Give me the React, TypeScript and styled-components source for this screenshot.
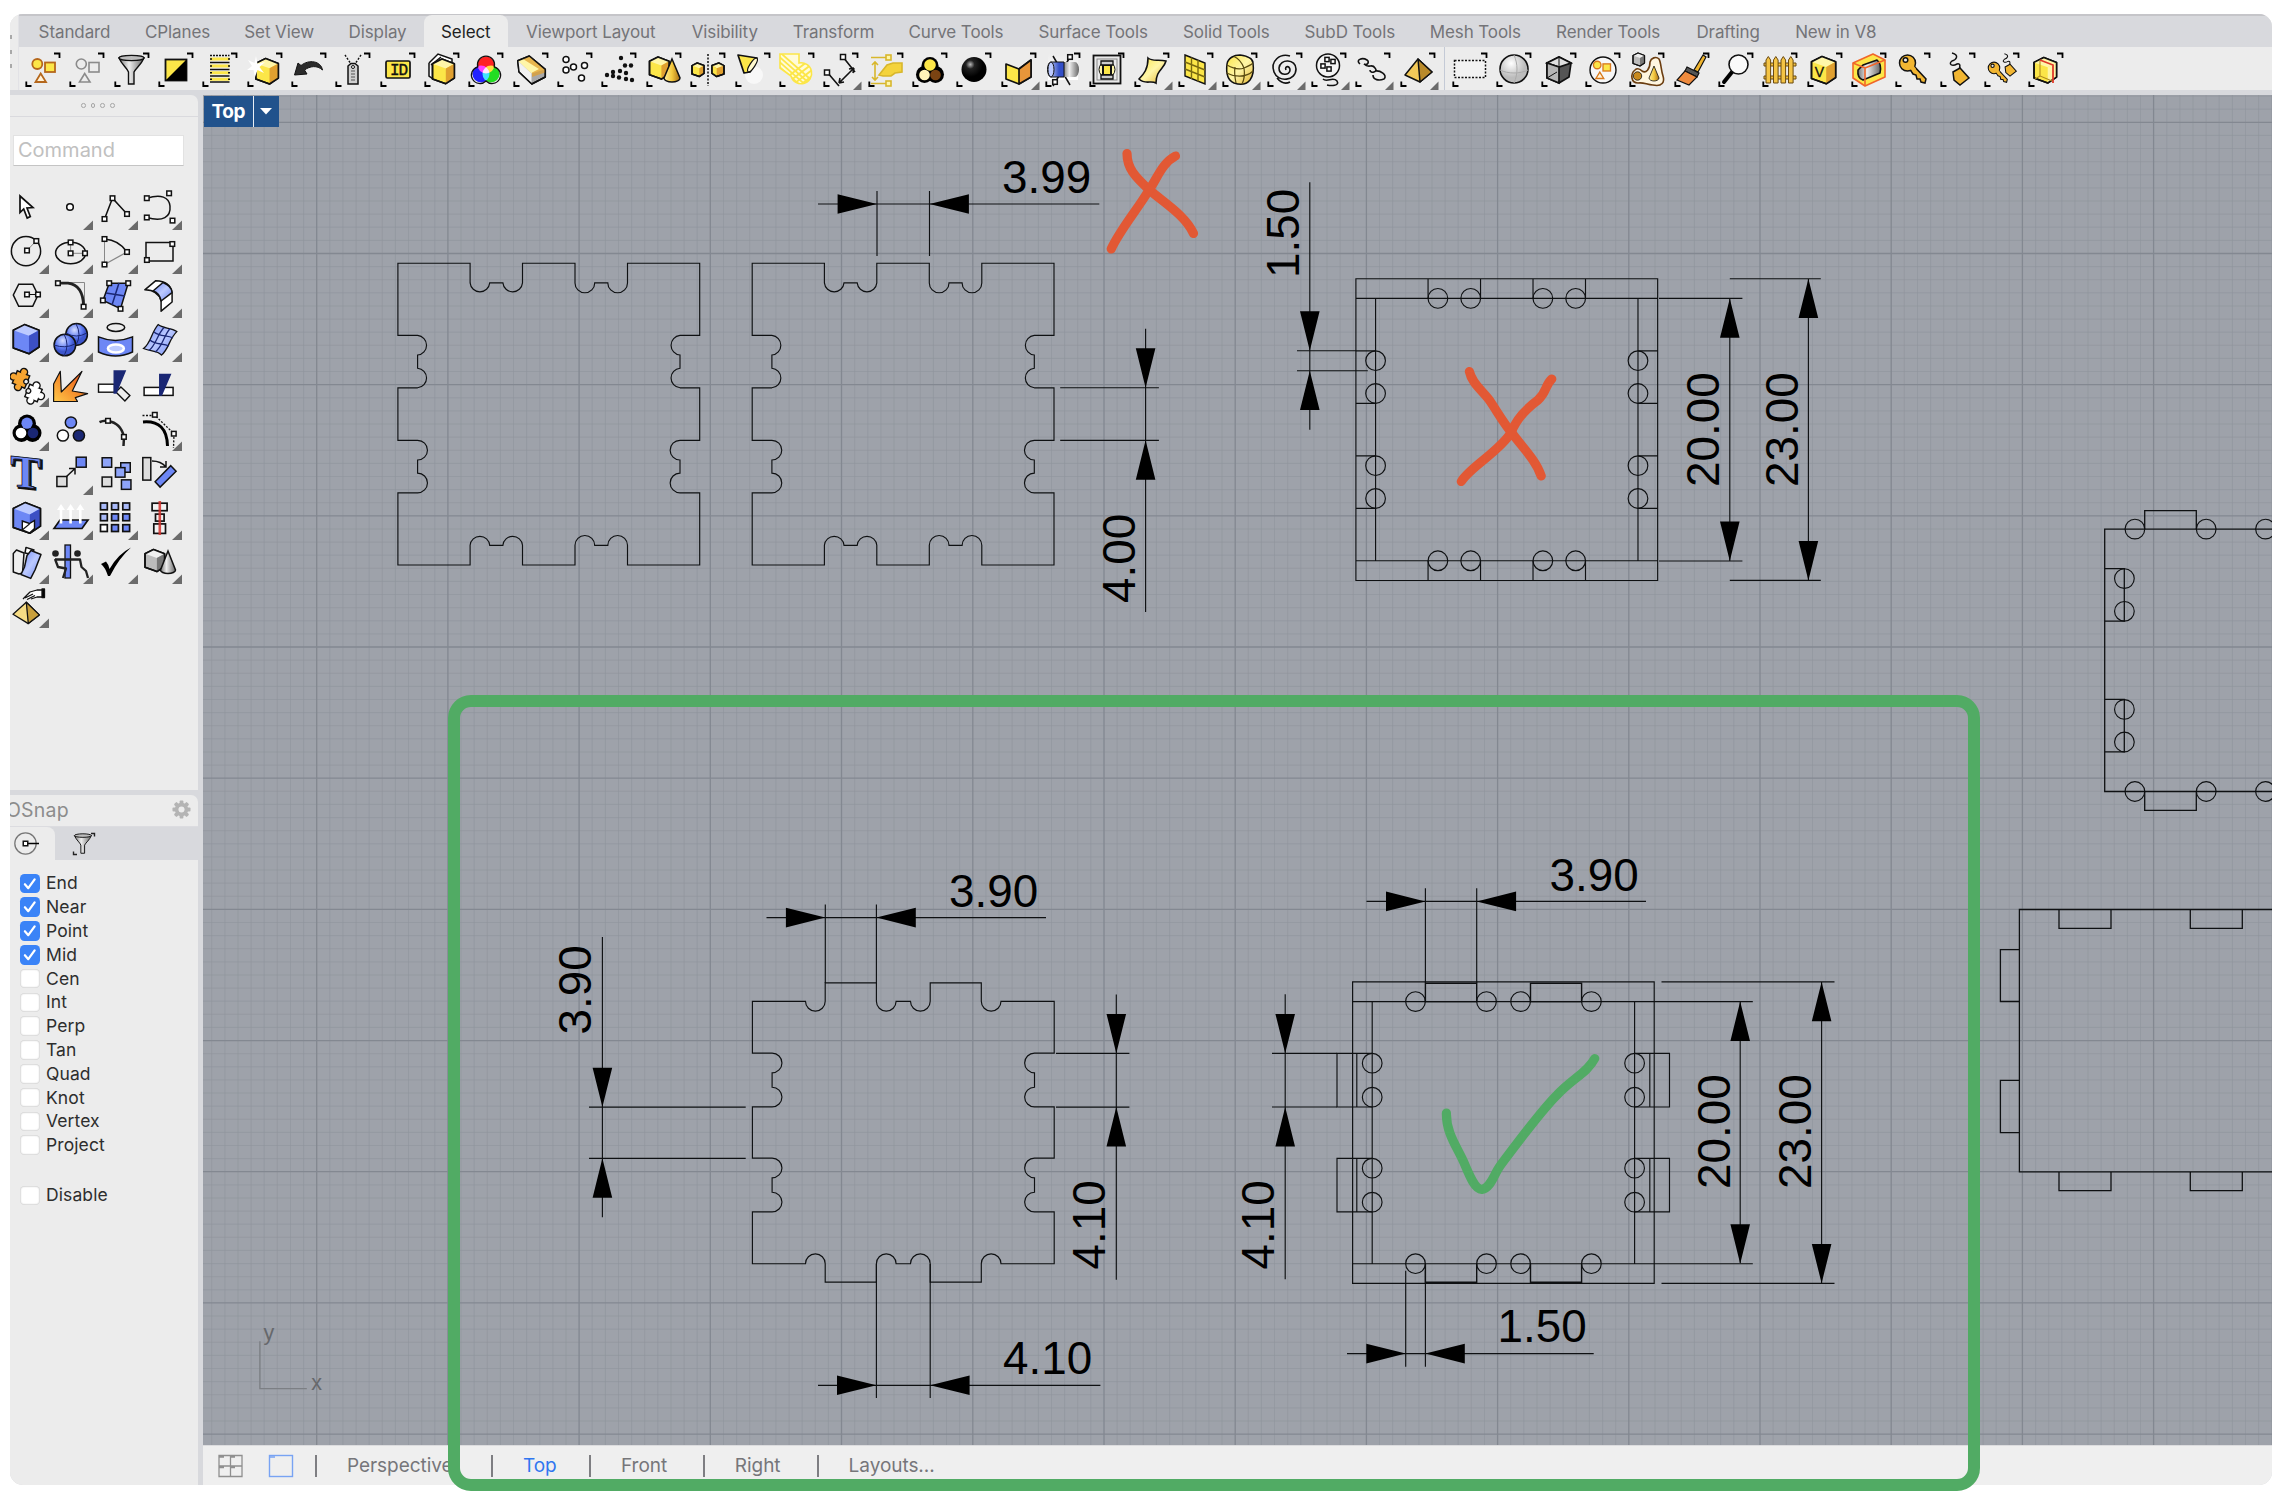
import React from "react";
import styled, { createGlobalStyle } from "styled-components";

const Global = createGlobalStyle`
  html, body { margin: 0; padding: 0; background: #fff; }
  * { box-sizing: border-box; }
  body { font-family: Inter, Roboto, "Liberation Sans", sans-serif; }
`;

/* ---------- shell ---------- */

const Page = styled.div`
  position: relative;
  width: 2286px;
  height: 1498px;
  padding: 14px 14px 13px 10px;
  overflow: hidden;
  background: #fff;
`;

const Window = styled.div`
  width: 2262px;
  height: 1471px;
  display: flex;
  flex-direction: column;
  border-radius: 13px;
  overflow: hidden;
  background: #d8d9dd;
`;

const TopArea = styled.div`
  display: flex;
  height: 76px;
  background: #ececec;
`;

const Grip = styled.div`
  width: 9px;
  display: flex;
  flex-direction: column;
  gap: 10.5px;
  padding-top: 21px;
  background: #ececec;
  border-right: 1px solid #e2e2e6;
`;

const GripDot = styled.div`
  width: 1.5px;
  height: 4px;
  background: #a9a9a9;
`;

const TopColumn = styled.div`
  flex: 1;
  display: flex;
  flex-direction: column;
`;

const TabStrip = styled.div`
  height: 33px;
  display: flex;
  padding-left: 2px;
  background: #d8d9dd;
  border-top: 2px solid #c5c5c9;
`;

const Tab = styled.div<{ $w: number; $active?: boolean }>`
  width: ${(p) => p.$w}px;
  display: flex;
  align-items: center;
  justify-content: center;
  flex: none;
  white-space: nowrap;
  font-size: 17px;
  letter-spacing: -0.1px;
  color: ${(p) => (p.$active ? "#1f1f1f" : "#747478")};
  background: ${(p) => (p.$active ? "#ececec" : "transparent")};
  border-radius: 8px 8px 0 0;
  margin-top: ${(p) => (p.$active ? "-1px" : "0")};
  padding-top: ${(p) => (p.$active ? "2px" : "1px")};
`;

const ToolBar = styled.div`
  height: 43px;
  display: flex;
  padding: 5px 0 0 6px;
  background: #ececec;
`;

const ToolCell = styled.div`
  width: 44.35px;
  height: 38px;
  flex: none;
  svg { display: block; overflow: visible; }
`;

const ToolSeparator = styled.div`
  width: 1px;
  height: 43px;
  margin: -5px 7px 0 0;
  background: #c4cad6;
`;

const Body = styled.div`
  flex: 1;
  display: flex;
  gap: 5px;
  padding-top: 5px;
  min-height: 0;
`;

/* ---------- sidebar ---------- */

const Sidebar = styled.div`
  width: 188px;
  display: flex;
  flex-direction: column;
  gap: 5px;
`;

const Panel = styled.div<{ $h?: number }>`
  height: ${(p) => (p.$h ? p.$h + "px" : "auto")};
  flex: ${(p) => (p.$h ? "none" : "1")};
  background: #ececec;
  border-radius: 0 7px 0 0;
  overflow: hidden;
`;

const DotHeader = styled.div`
  height: 21.5px;
  display: flex;
  align-items: center;
  gap: 5.1px;
  padding-left: 71px;
  border-bottom: 1px solid #dadade;
`;

const HeaderDot = styled.div`
  width: 4.6px;
  height: 4.6px;
  border: 1.2px solid #a6a6a6;
  border-radius: 50%;
`;

const CommandInput = styled.div`
  width: 171px;
  height: 31px;
  margin: 18px 0 25px 3px;
  padding: 0 0 1px 4px;
  display: flex;
  align-items: center;
  background: #fff;
  border: 1px solid #e2e2e2;
  border-bottom-color: #c4c4c4;
  color: #c0c0c0;
  font-size: 20px;
`;

const ToolGrid = styled.div`
  display: grid;
  grid-template-columns: repeat(4, 44.4px);
  grid-auto-rows: 44.3px;
  svg { display: block; overflow: visible; }
`;

const OsnapHeader = styled.div`
  height: 32px;
  display: flex;
  align-items: center;
  justify-content: space-between;
  padding: 0 7px 2px 0;
  border-bottom: 1px solid #dcdce0;
`;

const OsnapTitle = styled.span`
  margin-left: -4px;
  font-size: 19.5px;
  letter-spacing: 0.2px;
  color: #8c8c8c;
`;

const OsnapTabs = styled.div`
  height: 33px;
  display: flex;
  background: #d8d9dd;
`;

const OsnapTab = styled.div<{ $active?: boolean }>`
  width: ${(p) => (p.$active ? 45 : 56)}px;
  height: 33px;
  background: ${(p) => (p.$active ? "#ececec" : "transparent")};
  border-radius: 0 8px 0 0;
  svg { display: block; overflow: visible; }
`;

const CheckList = styled.div`
  display: flex;
  flex-direction: column;
  padding: 11.5px 0 0 10px;
`;

const CheckRow = styled.div<{ $gap?: boolean }>`
  height: 23.8px;
  margin-top: ${(p) => (p.$gap ? "26.5px" : "0")};
  display: flex;
  align-items: center;
  gap: 6.5px;
  font-size: 17.5px;
  line-height: 20px;
  letter-spacing: 0.1px;
  color: #2e2e2e;
`;

const CheckBox = styled.div<{ $on?: boolean }>`
  width: 19.5px;
  height: 19.5px;
  border-radius: 4.5px;
  background: ${(p) => (p.$on ? "#3a83f7" : "#fff")};
  box-shadow: ${(p) => (p.$on ? "none" : "inset 0 0 1.5px 0.7px rgba(0,0,0,.2)")};
  svg { display: block; }
`;

/* ---------- viewport ---------- */

const Main = styled.div`
  flex: 1;
  display: flex;
  flex-direction: column;
  min-width: 0;
`;

const Viewport = styled.div`
  position: relative;
  height: 1350px;
  overflow: hidden;
  background: #9ea2aa;
  svg.model { display: block; }
`;

const ViewLabel = styled.div`
  position: absolute;
  left: 1px;
  top: 1px;
  height: 30.5px;
  display: flex;
  gap: 1.5px;
  background: #e9eef5;
`;

const ViewName = styled.div`
  width: 48.5px;
  display: flex;
  align-items: center;
  justify-content: center;
  background: #21528c;
  color: #fff;
  font-weight: 700;
  font-size: 19px;
  letter-spacing: -0.4px;
`;

const ViewArrow = styled(ViewName)`
  width: 24.5px;
`;

const Footer = styled.div`
  flex: 1;
  display: flex;
  align-items: center;
  background: #efefef;
  border-top: 1px solid #dcdcde;
  padding-left: 15px;
  svg { display: block; flex: none; }
`;

const FooterItem = styled.div<{ $w: number; $active?: boolean }>`
  width: ${(p) => p.$w}px;
  flex: none;
  padding: 0 0 1px 30px;
  font-size: 19px;
  letter-spacing: -0.05px;
  color: ${(p) => (p.$active ? "#2f76f0" : "#76767a")};
  border-left: 2px solid #7e7e82;
  line-height: 21px;
  white-space: nowrap;
`;

const GreenFrame = styled.div`
  position: absolute;
  left: 448px;
  top: 695px;
  width: 1532px;
  height: 796px;
  border: 12px solid #51ab64;
  border-radius: 23px;
`;

/* ---------- shared drawing helpers ---------- */

const K = "#111";
const Y = "#fce648";
const YD = "#e0a030";
const YL = "#fff6a8";
const B = "#6d87f5";
const BD = "#3c50c4";
const BL = "#bccaff";
const NV = "#1a2774";

const Cube = ({ x = 0, y = 0, s = 1, t = YL, l = Y, r = YD, sw = 1.6 }: any) => (
  <g transform={`translate(${x} ${y}) scale(${s})`} stroke={K} strokeWidth={sw / s} strokeLinejoin="round">
    <path d="M0 5 L10 0 L23 5 L23 20 L14 26 L0 21Z" fill={l} />
    <path d="M0 5 L10 0 L23 5 L14 10Z" fill={t} stroke="none" />
    <path d="M14 10 L23 5 L23 20 L14 26Z" fill={r} stroke="none" />
    <path d="M0 5 L10 0 L23 5 L23 20 L14 26 L0 21Z" fill="none" />
  </g>
);

const Sq = ({ x, y, s = 4.6, f = "#fff", sw = 1.5 }: any) => (
  <rect x={x - s / 2} y={y - s / 2} width={s} height={s} fill={f} stroke={K} strokeWidth={sw} />
);

const Key = () => (
  <g stroke={K} strokeWidth="1.5" fill="#f2b632">
    <path d="M13 14 L17 12 L31 27 L30 31 L26 30 L25 27 L22 27 L21 23 L18 22Z" />
    <circle cx="12.500" cy="11" r="8" />
    <circle cx="10.500" cy="8" r="2.300" fill="#ececec" />
    <path d="M15 16.500 L18.500 13.500 L21 17 L18 20Z" stroke="none" />
  </g>
);

const Tag = () => (
  <g stroke={K} fill="none" strokeWidth="1.5">
    <path d="M12 1 C20 3 16 8 12 9 C8 12 12 15 17 12 C21 11 20 15 19 18" />
    <path d="M13 20 L20 16 L29 26 L20 33 L14 28Z" fill="#f2b632" />
  </g>
);

const shapes = (s: string, f: string) => (
  <g stroke={s} fill={f} strokeWidth="1.8">
    <circle cx="12.300" cy="12" r="5" />
    <rect x="20" y="10.500" width="10" height="9.500" />
    <path d="M15.700 21.500 L10.500 30 L21 30Z" fill="#fff2d8" />
  </g>
);

const funnel = (
  <g stroke={K} strokeWidth="1.4">
    <path d="M5 6 C8 13 13 16 14.500 20 L14.500 32 L20 32 L20 20 C22 16 27 13 30 6Z" fill="url(#steel)" />
    <ellipse cx="17.500" cy="6" rx="12.500" ry="2.600" fill="#bdbdbd" />
  </g>
);

/* ---------- horizontal toolbar icons ---------- */

const toolIcons: { art: React.ReactNode; more?: boolean }[] = [
  { art: shapes("#b5671b", Y) },
  { art: <g stroke="#8b8b8b" fill="none" strokeWidth="1.6"><circle cx="12.300" cy="12" r="5" /><rect x="20" y="10.500" width="10" height="9.500" /><path d="M15.700 21.500 L10.500 30 L21 30Z" /></g> },
  { art: funnel },
  { art: <g><rect x="7.500" y="7.500" width="21" height="21" fill={Y} stroke={K} strokeWidth="1.800" /><path d="M28.500 7.500 V28.500 H7.500Z" fill="#000" /></g> },
  { art: <g>{[3.5, 10.5, 17.5, 24, 30].map((y) => <path key={y} d={`M8 ${y} H27.500`} stroke={K} strokeWidth="1.600" strokeDasharray={y === 3.5 ? "2 1" : ""} />)}{[7, 14, 20.8, 27.2].map((y) => <g key={y}><path d={`M8 ${y} H27.500`} stroke={Y} strokeWidth="3" /><path d={`M8 ${y} h2 M26 ${y} h2`} stroke={K} strokeWidth="1.500" /></g>)}</g> },
  { art: <g><Cube x={8.8} y={6.5} s={0.98} /><path d="M9 4 L10.500 12 L18 10 L12.500 15 L17 21 L10.500 18 L8 25 L6.500 18 L0 18 L5 14 L1 8 L7.500 11Z" fill="#fff" /></g> },
  { art: <path d="M3.500 23 L7 11 L10 13.500 C18 7 30 9 31.500 18 C26 13 19 14 13.500 18 L16 22Z" fill="#2b2b2b" stroke={K} /> },
  { art: <g><path d="M10 3 L16 12 M26 3 L20 12" stroke={K} strokeDasharray="2 1.500" strokeWidth="1.400" /><path d="M13 14 L16 11.500 H20 L23 14 V32 H13Z" fill="#cfcfcf" stroke={K} strokeWidth="1.500" /><circle cx="18" cy="15" r="1.500" fill="#fff" stroke={K} /><path d="M16 19 H20 M16 22 H20 M16 25 H20 M16 28 H20" stroke="#555" strokeWidth="1.200" /></g> },
  { art: <g><rect x="6" y="9" width="24" height="17" rx="1.500" fill={Y} stroke={K} strokeWidth="1.700" /><text x="18.500" y="23" fontSize="16" fontFamily="Liberation Mono, monospace" textAnchor="middle" fill={K} stroke={K} strokeWidth=".4" letterSpacing="-1">ID</text></g> },
  { art: <g><path d="M5 11 L14 2 L28 7 L28 12 M5 11 V24 L9 27 M7 13 L17 5" fill="#fff" stroke={K} strokeWidth="1.500" /><Cube x={8.5} y={7} s={0.95} /></g> },
  { art: <g><g style={{ isolation: "isolate" }}><circle cx="18" cy="13" r="8.500" fill="#f22" /><circle cx="13" cy="22" r="8.500" fill="#22f" style={{ mixBlendMode: "screen" }} /><circle cx="23" cy="22" r="8.500" fill="#2d2" style={{ mixBlendMode: "screen" }} /></g><path d="M9.800 14.800 A8.500 8.500 0 1 1 26.200 14.800 A8.500 8.500 0 1 1 18 29 A8.500 8.500 0 1 1 9.800 14.800Z" fill="none" stroke={K} strokeWidth="1.300" /></g> },
  { art: <g stroke={K} strokeWidth="1.500" strokeLinejoin="round"><path d="M4.700 8.700 L16.300 4 L32.300 17.300 V25 L18.800 32 L6 20Z" fill="#a8a8a8" /><path d="M4.700 8.700 L16.300 4 L32.300 17.300 L18.500 21.500Z" fill={YL} stroke="none" /><path d="M4.700 8.700 L18.500 21.500 V31 L6 19Z" fill="#f2f2f2" stroke="none" /><path d="M10 7 L16.300 4 L32 17.300 V20.500 L19 25 V20.500 L26 17Z" fill={YD} stroke="none" opacity=".75" /><path d="M4.700 8.700 L16.300 4 L32.300 17.300 V25 L18.800 32 L6 20Z" fill="none" /></g> },
  { art: <g fill="#fff" stroke={K} strokeWidth="1.500">{[[9, 7.500], [9, 18], [16.500, 15], [27.500, 13.500], [24.500, 26]].map(([a, b]) => <circle key={a + "-" + b} cx={a} cy={b} r="3" />)}</g> },
  { art: <g fill={K}>{[[20, 6], [24, 13.500], [30, 13.500], [12, 20], [19, 19], [6, 23], [12, 24], [18, 25.500], [25, 21], [25, 27], [31, 28]].map(([a, b]) => <circle key={a + "-" + b} cx={a} cy={b} r="2.200" />)}</g> },
  { art: <g><Cube x={3.5} y={5} s={0.85} /><path d="M26 7 L34 26 A8 4 0 0 1 18 26Z" fill="url(#gold)" stroke={K} strokeWidth="1.500" /></g> },
  { art: <g><path d="M18 2 V34" stroke={K} strokeWidth="1.500" strokeDasharray="2 1.500" /><Cube x={2} y={11} s={0.52} /><g transform="translate(34 0) scale(-1 1)"><Cube x={0} y={11} s={0.52} r={Y} l={YD} /></g></g> },
  { art: <g><circle cx="19" cy="23" r="9" fill="#f8f8f8" /><path d="M3 3 L9 21 L15 20 L22 6Z" fill={Y} stroke={K} strokeWidth="1.700" strokeLinejoin="round" /><ellipse cx="17.500" cy="13" rx="2.500" ry="8" transform="rotate(33 17.500 13)" fill="#fff9cf" stroke={K} strokeWidth="1.200" /></g> },
  { art: <g><clipPath id="hatchclip"><path d="M1 2 H20 V11 A10.500 10.500 0 1 1 12 24 L1 16Z" /></clipPath><path d="M1 2 H20 V11 A10.500 10.500 0 1 1 12 24 L1 16Z" fill="#fffbd8" stroke={Y} strokeWidth="1.600" /><g clipPath="url(#hatchclip)" stroke={Y} strokeWidth="1.800">{[0, 1, 2, 3, 4, 5, 6, 7, 8, 9, 10].map((o) => <path key={o} d={o < 5 ? `M-4 ${-4 + o * 5} L30 ${26 + o * 5}` : `M-6 ${o * 6 + 6} L46 ${o * 6 - 34}`} />)}</g></g> },
  { art: <g stroke={K} strokeWidth="1.600"><path d="M20 5 L32 20 M4 20 L16 34 M31 16 L16 31 M31 16 l-5 1 M31 16 l-1 5 M16 31 l5 -1 M16 31 l1 -5" /><Sq x={20} y={5} s={5} /><Sq x={4} y={20.500} s={5} /></g>, more: true },
  { art: <g stroke="#d8b72c" fill="none" strokeWidth="1.600"><path d="M3 5.500 H18 M3 31.500 H18 M7 11 V27 M4 13 L7 10 L10 13 M4 25 L7 28 L10 25" /><rect x="18" y="3" width="5" height="5" fill={YL} /><rect x="18" y="29" width="5" height="5" fill={YL} /><path d="M11 23 L19 13 L25 11 H34 V20 L27 21 L23 24 L15 24Z" fill="#f4d33c" /></g> },
  { art: <g><g fill="#000"><circle cx="18" cy="13.500" r="8.500" /><circle cx="12.500" cy="22.500" r="8.500" /><circle cx="23.500" cy="22.500" r="8.500" /></g><circle cx="18" cy="13" r="5.800" fill={Y} /><circle cx="12.500" cy="23" r="5.300" fill="#fff4b8" /><circle cx="23.500" cy="23" r="5.300" fill="#7a4312" /></g> },
  { art: <circle cx="18" cy="17.500" r="12.500" fill="url(#black)" /> },
  { art: <g stroke={K} strokeWidth="1.700" strokeLinejoin="round"><path d="M5 12 L18 17 L30 8 V25 L18 32 L5 27Z" fill={Y} /><path d="M18 17 L30 8 V25 L18 32Z" fill="#e8963a" /></g>, more: true },
  { art: <g><rect x="3" y="2" width="30" height="26" fill="url(#fade)" /><path d="M8 34 L25 5 M8 4 L25 33" stroke={K} strokeWidth="1.500" /><path d="M18 10 H30 A4 7.500 0 0 1 30 25 H18Z" fill="url(#steel)" /><path d="M6 10 H19 V25 H6 A3.500 7.500 0 0 1 6 10Z" fill="url(#bluecyl)" stroke={K} /><ellipse cx="6" cy="17.500" rx="3" ry="7.500" fill={BL} stroke={K} /><Sq x={25} y={5} /><Sq x={10} y={30} /></g> },
  { art: <g fill="none" stroke={K}><rect x="4.500" y="3.500" width="27" height="28" fill="#e9e9e9" strokeWidth="1.800" /><rect x="8" y="7" width="20" height="21" stroke="#888" /><circle cx="18" cy="17.500" r="8" fill={YL} /><rect x="14" y="13" width="8" height="10" fill={Y} strokeWidth="2" /><path d="M12 9 H24 V13 H12Z M12 23 H24 V27 H12Z" fill="#ccc" strokeWidth="1.300" /></g> },
  { art: <path d="M14 6 C19 10 24 7 32 9 C30 17 22 18 22 31 C17 28 11 33 5 27 C10 22 14 17 14 6Z" fill="url(#ylin)" stroke={K} strokeWidth="1.600" />, more: true },
  { art: <g stroke={K} strokeWidth="1.400" fill="none"><path d="M7 3 L27 11 V32 L7 24Z" fill={Y} /><path d="M13.500 5.500 V27 M20 8 V29.500 M7 10 L27 18 M7 17 L27 25" stroke="#7a6a10" /></g>, more: true },
  { art: <g stroke={K} strokeWidth="1.500"><path d="M5 12 C6 6 12 3 18 3 C25 4 31 6 31 11 C32 18 31 24 28 28 C24 33 18 33 12 31 C5 28 4 20 5 12Z" fill="url(#ylin)" /><path d="M5 13 C12 17 17 18 22 16 C27 14 30 12 31 11 M22 16 C23 22 22 28 20 32 M13 15 C12 20 13 26 14 31 M4.500 21 C12 25 24 26 31 19 M12 4.500 C18 7 20 11 22 16" fill="none" strokeWidth="1.200" stroke="#5a4a10" /></g>, more: true },
  { art: <path d="M18 18 C16 14 22 13 22 18 C22 24 11 24 11 16 C12 6 28 7 28 17 C28 29 10 31 6 20 C2 9 12 1 22 4 M9 26 C13 31 18 32 22 30" transform="translate(1 0)" fill="none" stroke={K} strokeWidth="1.600" />, more: true },
  { art: <g fill="none" stroke={K} strokeWidth="1.500"><circle cx="17" cy="13.500" r="11.500" fill="#f4f4f4" /><Sq x={16} y={7.500} s={4.200} /><Sq x={22} y={9.500} s={4.200} /><Sq x={12} y={14} s={4.200} /><Sq x={18} y={17} s={4.200} /><path d="M12 27 C16 31 22 24 26 29 C29 34 20 34 16 33" /></g>, more: true },
  { art: <g fill="none" stroke={K} strokeWidth="1.600"><path d="M5 12 C0 8 7 5 12 8 C15 10 12 14 9 12 M9 12 C14 17 17 11 20 16 C24 20 15 22 15 18 M20 19 C25 18 33 23 29 27 C24 29 18 28 18 23" /></g>, more: true },
  { art: <g stroke={K} strokeWidth="1.500" strokeLinejoin="round"><path d="M18 7 L5 23 L20 30 L32 20Z" fill="#f3c958" /><path d="M18 7 L20 30 L32 20Z" fill="#b98a2a" /></g>, more: true },
];

const toolIcons2: { art: React.ReactNode; more?: boolean }[] = [
  { art: <rect x="2.500" y="8.500" width="31" height="17" fill="#f2f2f2" stroke={K} strokeWidth="1.500" strokeDasharray="2 1.500" /> },
  { art: <g><circle cx="18" cy="17" r="14" fill="url(#ball)" stroke={K} strokeWidth="1.600" /><path d="M18 3 C22 12 22 22 18 31 M4 18 C12 22 24 22 32 18" stroke="#aaa" fill="none" /></g> },
  { art: <g stroke={K} strokeWidth="1.700"><path d="M6 11 L18 5 L30 11 L28 25 L18 31 L6 26Z" fill="#555" /><path d="M6 11 L18 5 L30 11 L18 15Z" fill="#e0e0e0" /><path d="M6 11 L18 15 V31 L6 26Z" fill="#b5b5b5" /><path d="M18 5 V15 M6 26 L16 20" strokeWidth="1" /></g> },
  { art: <g><circle cx="18" cy="18" r="13" fill="#f7f7f7" stroke={K} strokeWidth="1.400" /><g transform="translate(3 4) scale(.75)">{shapes("#d97a1e", Y)}</g></g> },
  { art: <g><Cube x={4} y={1} s={0.5} t="#eee" l="#bbb" r="#777" sw={1.2} /><path d="M6 18 C1 22 2 31 9 31 C15 30 18 33 24 33 C33 35 36 30 34 24 C32 18 32 10 30 7 C27 4 22 6 21 10 C21 17 17 22 13 19 C11 17 8 16 6 18Z" fill="#fff6e0" stroke="#6b3d10" strokeWidth="1.600" /><circle cx="8.500" cy="24" r="4.200" fill="#c98a1e" stroke={K} strokeWidth=".8" /><path d="M25 14 L30 26 A5 3 0 0 1 20 26Z" fill="url(#gold)" stroke={K} strokeWidth=".8" /></g> },
  { art: <g stroke={K} strokeWidth="1.200"><path d="M29 3 L32 5 L24 20 L20 18Z" fill="#f0b52f" /><path d="M13 15 L25 21 L23 25 L11 19Z" fill="#555" /><path d="M11 19 L23 25 L15 33 L3 28Z" fill="#ef8b3e" /></g> },
  { art: <g><path d="M14 20 L6 30" stroke="#000" strokeWidth="4" strokeLinecap="round" /><circle cx="20.500" cy="12.500" r="9.500" fill="#fafafa" stroke={K} strokeWidth="1.600" /></g> },
  { art: <g stroke="#6b4a10" strokeWidth="1" fill="#f4c445"><path d="M2 11 H34 V14 H2Z M2 24 H34 V27 H2Z" />{[4, 11.5, 19, 26.5].map((x) => <path key={x} d={`M${x} 8 l2.300 -3.500 l2.300 3.500 V31 h-4.600Z`} />)}</g> },
  { art: <g><Cube x={4.500} y={4.500} s={1.05} /><text x="12.500" y="25" fontSize="14" textAnchor="middle" fill={K} stroke={K} strokeWidth=".3" fontFamily="Liberation Sans, sans-serif">V</text></g> },
  { art: <g strokeWidth="1.600" strokeLinejoin="round"><path d="M2 11 L22 2 L34 8 V25 L14 34 L2 26Z" fill={Y} stroke="#f0662a" /><path d="M7 18 L12 13 L26 8 Q31 12 29 21 L12 28 Q6 26 7 18Z" fill="url(#steel)" stroke={K} /><path d="M2 11 L14 16 L34 8 M14 16 V34" fill="none" stroke="#f0662a" /></g> },
  { art: <Key /> },
  { art: <Tag /> },
  { art: <g><g transform="translate(1 8) scale(.72)"><Key /></g><g transform="translate(12 1) scale(.7)"><Tag /></g></g> },
  { art: <g><Cube x={6} y={5.500} s={0.98} l={Y} r={YL} /><path d="M12 8 L25 13 V31" fill="none" stroke="#e03a2a" strokeWidth="1.800" /><path d="M12 9 V24 L24 29 M12 24 L7 27" fill="none" stroke="#b08a20" strokeWidth="1.100" /></g> },
];

const ToolIcon = ({ art, more }: { art: React.ReactNode; more?: boolean }) => (
  <ToolCell>
    <svg width="36" height="36" viewBox="0 0 36 36">
      {art}
      <path d="M29 1.500 H34.500 V6 M1.300 29.500 V34 H6.500" fill="none" stroke="#000" strokeWidth="1.800" />
      {more && <path d="M38.500 29.500 V38 H30Z" fill="#6b6b6b" />}
    </svg>
  </ToolCell>
);

/* ---------- sidebar icons ---------- */

const line = { fill: "none", stroke: K, strokeWidth: 1.5 } as const;
const Men = () => (
  <g fill="#222">
    <rect x="11" y="0" width="5.500" height="33" fill={B} stroke={K} strokeWidth="1.300" />
    <circle cx="1.500" cy="8.500" r="3.300" /><circle cx="23.500" cy="8.500" r="3.300" />
    <path d="M1 14.500 H26 L27.500 22 L32 26 L34 33" fill="none" stroke="#222" strokeWidth="2.300" strokeLinejoin="round" />
    <path d="M1 14 L4 22 L12 23.500 L9 33" fill="none" stroke="#222" strokeWidth="2.300" strokeLinejoin="round" />
  </g>
);

/* A jigsaw piece: body and knobs are outlined together, then filled on top to merge them. */
const Piece = ({ x, y, r, fill }: { x: number; y: number; r: number; fill: string }) => {
  const parts = (
    <>
      <rect x="-6" y="-6" width="12" height="12" />
      <circle cx="0" cy="-8" r="2.900" />
      <circle cx="0" cy="8" r="2.900" />
      <circle cx="-8" cy="0" r="2.900" />
    </>
  );
  return (
    <g transform={`translate(${x} ${y}) rotate(${r})`}>
      <g stroke={K} strokeWidth="2.800" fill={K}>{parts}</g>
      <g fill={fill}>{parts}</g>
      <circle cx="5.500" cy="0" r="2.400" fill="#ececec" stroke={K} strokeWidth="1.300" />
    </g>
  );
};

const sideIcons: { art: React.ReactNode; more?: boolean }[] = [
  { art: <path d="M10 5 V21.500 L13.700 18 L17.200 27 L20.300 25.500 L17 17 L23 16.500Z" fill="#fff" stroke={K} strokeWidth="1.700" /> },
  { art: <circle cx="16" cy="16" r="3.300" fill="#fff" stroke={K} strokeWidth="1.600" />, more: true },
  { art: <g><path d="M5.500 28 L13.500 7.200 L28 23" {...line} /><Sq x={5.500} y={28} /><Sq x={13.500} y={7.200} /><Sq x={28} y={23} /></g>, more: true },
  { art: <g><path d="M3.800 7.200 C18 3 26 6 27 15 C28 26 20 31 3.800 26.500" {...line} /><Sq x={3.800} y={7.200} /><Sq x={26.100} y={2.300} /><Sq x={3.800} y={26.500} /><Sq x={29.500} y={29.600} /></g>, more: true },
  { art: <g><circle cx="16" cy="16.200" r="14.600" {...line} /><path d="M17 15.500 L26 6" stroke="#888" /><Sq x={17} y={15.500} /><Sq x={26.300} y={6} /></g>, more: true },
  { art: <g><ellipse cx="16.600" cy="18" rx="15" ry="10.700" {...line} /><path d="M16.600 7 V18.300 H31" stroke="#888" fill="none" /><Sq x={16.600} y={7.400} /><Sq x={16.600} y={18.300} /><Sq x={31} y={18.300} /></g>, more: true },
  { art: <g><path d="M5.500 29.500 V4" stroke="#888" /><path d="M28 17 L5.500 29.500" stroke="#888" strokeWidth="1.300" /><path d="M5.500 4 Q20 5 28 17" {...line} /><Sq x={5.500} y={4} /><Sq x={28} y={17} /><Sq x={5.500} y={29.500} /></g>, more: true },
  { art: <g><rect x="3" y="7.500" width="27" height="18.500" {...line} /><Sq x={29.300} y={9} /><Sq x={3.900} y={25} /></g>, more: true },
  { art: <g><path d="M3.300 16 L8.700 5.200 H22.700 L28 16 L22.700 27.300 H8.700Z" {...line} /><path d="M17 15.500 H28" stroke={K} /><Sq x={17} y={15.500} /><Sq x={28} y={15.500} /></g>, more: true },
  { art: <g><path d="M8 3.500 H30.500 V26" fill="none" stroke="#888" /><path d="M4 4.200 H14 Q29 6 29.600 27" fill="none" stroke="#222" strokeWidth="2.800" /><Sq x={3.900} y={4.200} /><Sq x={29.600} y={27.700} /></g>, more: true },
  { art: <g stroke={K} strokeWidth="1.500"><path d="M10.200 4.200 H29.200 L21.500 29.800 L4 21.400Z" fill={B} /><path d="M20 4 L13 26 M7 14 L26 17" stroke={NV} /><Sq x={10.200} y={4.200} /><Sq x={29.200} y={4.200} /><Sq x={21.500} y={29.800} /><Sq x={3.900} y={21.400} /></g>, more: true },
  { art: <g stroke={K} strokeWidth="1.500" strokeLinejoin="round"><path d="M1.800 10.800 L12.800 1.700 C22 2 28 6 29.100 13.600 L29.100 23 L18.100 32.200 V22 C16 14 10 11 1.800 10.800Z" fill="#fff" /><path d="M10 12 L20 3.500 C26 6 29 9 29 13.600 L18.100 22 C17 17 14 13 10 12Z" fill="url(#blin)" /></g>, more: true },
  { art: <Cube x={3.300} y={1.600} s={1.120} t={BL} l={B} r={BD} />, more: true },
  { art: <g stroke={K} strokeWidth="1.500"><circle cx="22.600" cy="11.400" r="10.800" fill="url(#bball)" /><circle cx="10.900" cy="22" r="10.800" fill="url(#bball)" /><path d="M22 .6 Q28 12 22 22 M12 10 Q22 16 33 10 M10 11 Q16 22 10 33 M0 22 Q11 26 21 21" fill="none" strokeWidth="1" stroke={NV} /></g>, more: true },
  { art: <g stroke={K} strokeWidth="1.500"><ellipse cx="16.900" cy="4.400" rx="8.800" ry="4" fill="none" /><path d="M-.5 13.900 Q16.500 21 33.500 13.900 V29 Q16.500 37 -.5 29Z" fill={B} /><ellipse cx="16.900" cy="25.500" rx="8" ry="4" fill={BL} stroke="#fff" strokeWidth="2.500" /></g>, more: true },
  { art: <g stroke={K} strokeWidth="1.300"><path d="M15.100 1.600 C20 6 28 4 33.800 8.600 C26 16 26 26 18.500 32.100 C14 27 8 29 .5 25.500 C8 20 8 10 15.100 1.600Z" fill="url(#blin)" /><path d="M21 4.500 C14 12 13 22 6 27.500 M27 5.500 C20 14 19 25 12 29 M11 9 C17 14 24 12 30 15 M7 17 C12 22 20 20 26 23" fill="none" stroke={NV} /></g>, more: true },
  { art: <g><Piece x={11} y={11.500} r={22} fill="#f7a531" /><Piece x={23.500} y={25} r={202} fill="#fff" /></g>, more: true },
  { art: <path d="M-.4 33.500 V16 L6.300 3.300 L7.300 24 L28 3.300 L18.300 23 L33.600 25.600 L21.300 29.600 L23.500 33.500Z" fill="url(#orange)" stroke={K} strokeWidth="1.200" strokeLinejoin="round" /> },
  { art: <g stroke={K} strokeWidth="1.400"><rect x="-.5" y="16.200" width="16" height="8" fill="#fff" /><path d="M16.900 24 L21.900 19 L30.900 27.500 L25.900 33Z" fill="#eee" /><path d="M15.200 2.900 H26.200 L17 25 H15.200Z" fill={NV} stroke={NV} /></g> },
  { art: <g stroke={K} strokeWidth="1.500"><rect x="1.100" y="19.400" width="29" height="8" fill="#fff" /><path d="M16.800 6.400 H27.300 L18.500 27 H16.800Z" fill={NV} stroke={NV} /></g> },
  { art: <g><g fill="#000"><circle cx="17" cy="11.500" r="9" /><circle cx="11.500" cy="21" r="9" /><circle cx="22.500" cy="21" r="9" /></g><circle cx="17" cy="11.200" r="5.600" fill={B} /><circle cx="11" cy="21" r="5.300" fill="#fff" /><circle cx="23" cy="21" r="5.300" fill={NV} /></g>, more: true },
  { art: <g stroke={K} strokeWidth="1.500"><circle cx="16.900" cy="10.500" r="5.600" fill={B} /><circle cx="8.900" cy="23.500" r="5.600" fill="#fff" /><circle cx="24.900" cy="23.500" r="5.600" fill={NV} /></g> },
  { art: <g><path d="M.5 10.200 Q5 8 9 9 Q22 11 25 25 L24.500 34" fill="none" stroke="#222" strokeWidth="2.500" /><Sq x={9} y={8.800} /><Sq x={24.900} y={24.900} /></g> },
  { art: <g><path d="M0 10 Q24 8 24.500 34" fill="none" stroke="#000" strokeWidth="3" /><path d="M-.5 3.500 H12 L31 21.700 L30.500 36" fill="none" stroke={K} strokeWidth="1.300" strokeDasharray="2 1.500" /><Sq x={11.800} y={2.800} /><Sq x={30.800} y={21.700} /></g>, more: true },
  { art: <g transform="skewY(6) translate(0 -2)" fontSize="46" fontWeight="bold" textAnchor="middle" fontFamily="Liberation Serif, serif" stroke={K}><text x="17" y="33" fill={BD} strokeWidth="2">T</text><text x="15.500" y="32" fill={B} strokeWidth=".8">T</text></g> },
  { art: <g><Sq x={7.900} y={25.500} s={10} f="#ddd" /><Sq x={27.200} y={6.200} s={10} f={B} /><path d="M12 21 L21 12.500 M15 12.500 H21 V18.500" {...line} /></g>, more: true },
  { art: <g><Sq x={7.900} y={6.500} s={9.500} f="#8ea4f8" /><Sq x={26.500} y={11.500} s={9.500} f="#8ea4f8" /><Sq x={21.200} y={16.400} s={9.500} f="#8ea4f8" /><Sq x={7.900} y={25.800} s={9.500} f="#ddd" /><Sq x={27.200} y={28.600} s={9.500} f="#8ea4f8" /></g> },
  { art: <g stroke={K} strokeWidth="1.500"><rect x="-.2" y="1.600" width="8" height="22.500" fill="#ddd" /><path d="M27.800 9.700 L33.100 15.300 L17.100 31.100 L12.100 25.800Z" fill={B} /><path d="M9 5 Q18 5 23 11 M23 5 V11 H17" fill="none" /></g> },
  { art: <g><Cube x={3.300} y={1.600} s={1.180} t={BL} l={B} r={BD} /><path d="M12.300 20 L19.500 22.500 L24.500 19.500 V27.500 L19.500 32 L12.300 29Z" fill="#fff" stroke={K} strokeWidth="1.400" /><path d="M12.800 28.500 L19.500 23" stroke={K} strokeWidth="1.100" /></g>, more: true },
  { art: <g><path d="M0 27.500 L6 19 H34 L28 27.500Z" fill={B} stroke={K} strokeWidth="1.700" />{[7, 16.600, 26.300].map((x) => <path key={x} d={`M${x - 1.300} 22.500 V9 H${x - 4} L${x} 3 L${x + 4} 9 H${x + 1.300} V22.500Z`} fill="#fff" />)}</g>, more: true },
  { art: <g>{[5.400, 16.300, 27.100].map((y) => [4.900, 16, 27.200].map((x) => <Sq key={x + "-" + y} x={x} y={y} s={6.800} f={y > 27 && x < 5 ? "#fff" : x < 5 || y < 6 ? "#a9baf9" : B} sw={1.700} />))}</g>, more: true },
  { art: <g stroke={K} strokeWidth="1.700" fill="#f2f2f2"><rect x="9.100" y="2.200" width="15" height="7.500" /><rect x="12.500" y="13.100" width="8.600" height="7" /><rect x="10.800" y="22.900" width="11.700" height="9.500" /><path d="M16.800 0 V34" stroke="#d2322d" strokeWidth="2.600" opacity=".85" /></g>, more: true },
  { art: <g stroke={K} strokeWidth="1.500" strokeLinejoin="round"><path d="M3.300 8.400 L6.500 5 L14 8 L12.500 28 L9 29 L3.300 27Z" fill="#eee" /><path d="M15 8 L16 2.400 L24 5 L20 9Z" fill="#fff" /><path d="M17 10.500 L21 5.500 L31 9.500 L25 25 L20.700 33.400 L11 29.500 L14.500 22Z" fill="url(#blin)" /></g>, more: true },
  { art: <Men />, more: true },
  { art: <path d="M2 19 L7 16.500 Q10 20 10.500 24 Q19 9 32 2.500 Q20 13 11 31 H9 Q6 22 2 19Z" fill="#000" />, more: true },
  { art: <g><Cube x={2} y={4.500} s={0.85} t="#f0f0f0" l="#bdbdbd" r="#777" /><path d="M25 6 L32.500 25 A7.500 3.600 0 0 1 17.500 25Z" fill="url(#steel)" stroke={K} strokeWidth="1.500" /></g>, more: true },
  { art: <g stroke={K} strokeWidth="1.300" strokeLinejoin="round"><path d="M13 10 L20 3 L27 1 H34 V8 H27 L21 10 M15 9 L23 5 M17 10.500 L25 6.500" fill="#fff" /><path d="M32 0 H34.500 V8.500 H32Z" fill="#000" /><path d="M16.300 13.300 L3 25.200 L18.300 34.600 L29.300 25.900Z" fill="#f6dc85" /><path d="M16.300 13.300 L18.300 34.600 L29.300 25.900Z" fill="#c9a03c" /></g>, more: true },
];

const Defs = () => (
  <svg width="0" height="0" style={{ position: "absolute" }}>
    <defs>
      <linearGradient id="steel"><stop offset="0" stopColor="#777" /><stop offset=".4" stopColor="#eee" /><stop offset="1" stopColor="#666" /></linearGradient>
      <linearGradient id="gold"><stop offset="0" stopColor="#fff09a" /><stop offset=".5" stopColor="#f4c93e" /><stop offset="1" stopColor="#a86c14" /></linearGradient>
      <linearGradient id="ylin" x2="1" y2="1"><stop offset="0" stopColor={Y} /><stop offset=".5" stopColor={YL} /><stop offset="1" stopColor="#e2b32e" /></linearGradient>
      <linearGradient id="blin" x2="1" y2="1"><stop offset="0" stopColor={B} /><stop offset=".5" stopColor={BL} /><stop offset="1" stopColor={B} /></linearGradient>
      <linearGradient id="orange" x2="1" y1="1" y2="0"><stop offset="0" stopColor="#ffc94a" /><stop offset=".5" stopColor="#f58a2a" /><stop offset="1" stopColor="#e2401c" /></linearGradient>
      <linearGradient id="bluecyl"><stop offset="0" stopColor="#dfe6ff" /><stop offset=".7" stopColor="#3450c8" /></linearGradient>
      <linearGradient id="fade" x2="0" y2="1"><stop offset="0" stopColor="#ececec" /><stop offset="1" stopColor="#fff" /></linearGradient>
      <radialGradient id="black" cx=".35" cy=".3"><stop offset="0" stopColor="#bbb" /><stop offset=".35" stopColor="#222" /><stop offset="1" stopColor="#000" /></radialGradient>
      <radialGradient id="ball" cx=".4" cy=".3"><stop offset="0" stopColor="#fff" /><stop offset="1" stopColor="#bcbcbc" /></radialGradient>
      <radialGradient id="bball" cx=".4" cy=".3"><stop offset="0" stopColor="#d4ddff" /><stop offset=".7" stopColor="#5f7cf2" /><stop offset="1" stopColor="#3c55cc" /></radialGradient>
    </defs>
  </svg>
);

/* ---------- CAD model ---------- */

const U = 13.12;
const R = 0.75 * U;

const Grid = () => {
  const minor: string[] = [];
  const major: string[] = [];
  for (let i = -9; i < 150; i++) {
    const x = (316.7 + i * 13.121).toFixed(1);
    (i % 10 === 0 ? major : minor).push(`M${x} 95V1446`);
  }
  for (let i = -2; i < 101; i++) {
    const y = (122.3 + i * 13.118).toFixed(1);
    (i % 10 === 0 ? major : minor).push(`M202 ${y}H2273`);
  }
  return (
    <g fill="none">
      <path d={minor.join("")} stroke="#90959d" strokeWidth="1" opacity=".62" />
      <path d={major.join("")} stroke="#838891" strokeWidth="1.300" />
    </g>
  );
};

type Pt = [number, number];

const notchedPlate = (ox: number, oy: number) => {
  const p = (x: number, y: number) => `${(ox + x * U).toFixed(1)} ${(oy + y * U).toFixed(1)}`;
  const a = (s: number, x: number, y: number) => `A${R} ${R} 0 0 ${s} ${p(x, y)}`;
  let d = `M${p(0, 0)}`;
  for (const s of [5.5, 13.5]) d += `L${p(s, 0)}L${p(s, 1.5)}${a(0, s + 1.5, 1.5)}L${p(s + 2.5, 1.5)}${a(0, s + 4, 1.5)}L${p(s + 4, 0)}`;
  d += `L${p(23, 0)}`;
  for (const s of [5.5, 13.5]) d += `L${p(23, s)}L${p(21.5, s)}${a(0, 21.5, s + 1.5)}L${p(21.5, s + 2.5)}${a(0, 21.5, s + 4)}L${p(23, s + 4)}`;
  d += `L${p(23, 23)}`;
  for (const s of [17.5, 9.5]) d += `L${p(s, 23)}L${p(s, 21.5)}${a(0, s - 1.5, 21.5)}L${p(s - 2.5, 21.5)}${a(0, s - 4, 21.5)}L${p(s - 4, 23)}`;
  d += `L${p(0, 23)}`;
  for (const s of [17.5, 9.5]) d += `L${p(0, s)}L${p(1.5, s)}${a(0, 1.5, s - 1.5)}L${p(1.5, s - 2.5)}${a(0, 1.5, s - 4)}L${p(0, s - 4)}`;
  return d + "Z";
};

const tabbedPlate = (ox: number, oy: number) => {
  const p = (x: number, y: number) => `${(ox + x * U).toFixed(1)} ${(oy + y * U).toFixed(1)}`;
  const a = (x: number, y: number) => `A${R} ${R} 0 0 0 ${p(x, y)}`;
  let d = `M${p(0, 0)}`;
  for (const s of [5.55, 13.55]) d += `L${p(s - 1.5, 0)}${a(s, 0)}L${p(s, -1.4)}L${p(s + 3.9, -1.4)}L${p(s + 3.9, 0)}${a(s + 5.4, 0)}`;
  d += `L${p(23, 0)}`;
  for (const s of [3.95, 11.95]) d += `L${p(23, s)}L${p(21.5, s)}${a(21.5, s + 1.5)}L${p(21.5, s + 2.6)}${a(21.5, s + 4.1)}L${p(23, s + 4.1)}`;
  d += `L${p(23, 20)}`;
  for (const s of [17.45, 9.45]) d += `L${p(s + 1.5, 20)}${a(s, 20)}L${p(s, 21.4)}L${p(s - 3.9, 21.4)}L${p(s - 3.9, 20)}${a(s - 5.4, 20)}`;
  d += `L${p(0, 20)}`;
  for (const s of [16.05, 8.05]) d += `L${p(0, s)}L${p(1.5, s)}${a(1.5, s - 1.5)}L${p(1.5, s - 2.6)}${a(1.5, s - 4.1)}L${p(0, s - 4.1)}`;
  return d + "Z";
};

const Circles = ({ at }: { at: Pt[] }) => (
  <>{at.map(([x, y]) => <circle key={x + "-" + y} cx={x} cy={y} r={R} />)}</>
);

const boxC = (() => {
  const x = 1355.9, y = 278.7, w = 23 * U, i = 1.5 * U;
  let d = `M${x} ${y}h${w}v${w}h${-w}Z M${x} ${y + i}h${w} M${x} ${y + w - i}h${w} M${x + i} ${y + i}v${20 * U} M${x + w - i} ${y + i}v${20 * U}`;
  const c: Pt[] = [];
  for (const s of [5.5, 9.5, 13.5, 17.5]) {
    const q = s * U;
    d += `M${x + q} ${y}v${i} M${x + q} ${y + w}v${-i} M${x} ${y + q}h${i} M${x + w} ${y + q}h${-i}`;
  }
  for (const s of [6.25, 8.75, 14.25, 16.75]) {
    const q = s * U;
    c.push([x + q, y + i], [x + q, y + w - i], [x + i, y + q], [x + w - i, y + q]);
  }
  return { d, c };
})();

/* A dimension: extension lines, a dimension line, two arrow heads and a value. */
type Dim = {
  v?: boolean; inside?: boolean; at: number; a: number; b: number; from: number; to: number;
  ext: [number, number]; ext2?: [number, number]; text: string; tx: number; ty: number;
};

const Dimension = ({ v, inside, at, a, b, from, to, ext, ext2, text, tx, ty }: Dim) => {
  const e2 = ext2 || ext;
  const L = inside ? -39.4 : 39.4;
  const lines = v
    ? `M${at} ${from}V${to}M${ext[0]} ${a}H${ext[1]}M${e2[0]} ${b}H${e2[1]}`
    : `M${from} ${at}H${to}M${a} ${ext[0]}V${ext[1]}M${b} ${e2[0]}V${e2[1]}`;
  const h = 9.8;
  const heads = v
    ? `M${at} ${a}L${at - h} ${a - L}H${at + h}ZM${at} ${b}L${at - h} ${b + L}H${at + h}Z`
    : `M${a} ${at}L${a - L} ${at - h}V${at + h}ZM${b} ${at}L${b + L} ${at - h}V${at + h}Z`;
  return (
    <g>
      <path d={lines} fill="none" />
      <path d={heads} fill="#000" stroke="none" />
      <text fill="#000" stroke="none" fontSize="45.8" fontFamily="Liberation Sans, Arial, sans-serif" transform={`translate(${tx} ${ty})${v ? " rotate(-90)" : ""}`}>{text}</text>
    </g>
  );
};

const dims: Dim[] = [
  { at: 204, a: 877, b: 929.5, from: 818, to: 1099.3, ext: [191, 256], text: "3.99", tx: 1002, ty: 192.7 },
  { v: true, at: 1145.6, a: 387.7, b: 440.3, from: 328.7, to: 612, ext: [1060.2, 1158.9], text: "4.00", tx: 1134.5, ty: 603 },
  { v: true, at: 1309.8, a: 350.7, b: 370.7, from: 182.3, to: 429.7, ext: [1297, 1356], ext2: [1297, 1367.8], text: "1.50", tx: 1299, ty: 278 },
  { v: true, inside: true, at: 1729.8, a: 298.4, b: 561, from: 298, to: 561, ext: [1659, 1742.4], text: "20.00", tx: 1719, ty: 487 },
  { v: true, inside: true, at: 1808.4, a: 278.7, b: 580.4, from: 279, to: 580, ext: [1729.8, 1820.8], text: "23.00", tx: 1797.5, ty: 487 },
  { at: 917.6, a: 825.3, b: 876.4, from: 766.5, to: 1046, ext: [904.5, 983], text: "3.90", tx: 949, ty: 906.5 },
  { v: true, at: 602.4, a: 1107.1, b: 1158.3, from: 937, to: 1217.3, ext: [589, 745.7], text: "3.90", tx: 591.3, ty: 1034.5 },
  { v: true, at: 1116.3, a: 1053.3, b: 1107.1, from: 994.4, to: 1279.8, ext: [1056, 1129.4], text: "4.10", tx: 1105.2, ty: 1269.5 },
  { at: 1385.3, a: 876.4, b: 930.2, from: 818, to: 1100.4, ext: [1264, 1398], text: "4.10", tx: 1003, ty: 1374.4 },
  { at: 901.4, a: 1425.4, b: 1476.7, from: 1366.5, to: 1646, ext: [888.2, 983], text: "3.90", tx: 1549.5, ty: 890.5 },
  { v: true, at: 1285.2, a: 1053.3, b: 1107, from: 994.3, to: 1279.3, ext: [1272, 1337], text: "4.10", tx: 1274.2, ty: 1269.5 },
  { v: true, inside: true, at: 1740.2, a: 1001.6, b: 1263.7, from: 1002, to: 1263, ext: [1654, 1752.8], text: "20.00", tx: 1729.5, ty: 1189 },
  { v: true, inside: true, at: 1821.6, a: 981.9, b: 1283.3, from: 982, to: 1283, ext: [1661.5, 1834.5], text: "23.00", tx: 1810.8, ty: 1189 },
  { at: 1353.6, a: 1405.7, b: 1425.4, from: 1347, to: 1593.7, ext: [1270.7, 1366.8], text: "1.50", tx: 1497.5, ty: 1342.3 },
];

const Model = () => (
  <svg className="model" width="2069" height="1351" viewBox="203 95 2069 1351">
    <Grid />
    <g fill="none" stroke="#0e1012" strokeWidth="1.150">
      <path d={notchedPlate(397.9, 263.2)} />
      <path d={notchedPlate(752.2, 263.2)} />
      <path d={boxC.d} />
      <Circles at={boxC.c} />
      <path d={tabbedPlate(752.4, 1001.3)} />

      <path d="M1352.600 981.900H1654.200V1283.300H1352.600Z M1352.600 1001.600H1654.200 M1352.600 1263.700H1654.200 M1372.200 1001.600V1263.700 M1634.600 1001.600V1263.700" />
      <path d="M1425.400 1001.600V983.300H1476.700V1001.600Z M1530.500 1001.600V983.300H1581.600V1001.600Z M1425.400 1263.700V1282.300H1476.700V1263.700 M1530.500 1263.700V1282.300H1581.600V1263.700" strokeWidth="1.400" />
      <path d="M1372.200 1053.300H1337V1107H1372.200 M1356.800 1053.300V1107 M1372.200 1158.300H1337V1211.900H1372.200 M1356.800 1158.300V1211.900 M1634.600 1053.300H1669.500V1107H1634.600 M1649.800 1053.300V1107 M1634.600 1158.300H1669.500V1211.900H1634.600 M1649.800 1158.300V1211.900" />
      <Circles at={[[1415.500, 1001.600], [1486.500, 1001.600], [1520.600, 1001.600], [1591.400, 1001.600], [1415.500, 1263.700], [1486.500, 1263.700], [1520.600, 1263.700], [1591.400, 1263.700], [1372.200, 1063.200], [1372.200, 1097.200], [1372.200, 1168.200], [1372.200, 1202.200], [1634.600, 1063.200], [1634.600, 1097.200], [1634.600, 1168.200], [1634.600, 1202.200]]} />

      <path d="M2273 529.100H2104.700V791.500H2273 M2144.700 529.100V510.700H2196.300V529.100 M2144.700 791.500V810.300H2196.300V791.500 M2104.700 568.700H2124.300V621.100H2104.700 M2104.700 699.400H2124.300V751.800H2104.700" strokeWidth="1.300" />
      <Circles at={[[2134.900, 529.100], [2206.200, 529.100], [2265.500, 529.100], [2134.900, 791.500], [2206.200, 791.500], [2265.500, 791.500], [2124.400, 578.600], [2124.400, 611.300], [2124.400, 709.400], [2124.400, 742]]} />
      <path d="M2273 909.500H2019.400V1171.800H2273 M2059 909.500V928.400H2111V909.500 M2190.300 909.500V928.400H2242.300V909.500 M2059 1171.800V1190.700H2111V1171.800 M2190.300 1171.800V1190.700H2242.300V1171.800 M2019.400 949.600H2000.400V1001.500H2019.400 M2019.400 1080.400H2000.400V1132.700H2019.400" strokeWidth="1.300" />
      {dims.map((d, i) => <Dimension key={i} {...d} />)}
    </g>
    <path d="M259.900 1341.300V1388.600H306.800" fill="none" stroke="#7c7f84" strokeWidth="1.400" />
    <g fill="#66686c" fontSize="21.500" fontFamily="Liberation Sans, sans-serif">
      <text x="263.500" y="1339.500">y</text>
      <text x="311.300" y="1389.500">x</text>
    </g>
    <g fill="none" strokeWidth="9.200" strokeLinecap="round" strokeLinejoin="round" stroke="#e25834">
      <path d="M1127 153.500 C1127 168 1135 177 1149.500 190 C1163 202 1185 215 1193.500 233.500" />
      <path d="M1175.500 156 C1162 163 1157 179 1149 190 C1137 210 1120 230 1111.200 249" />
      <path d="M1469.400 371.500 C1472 384 1483 391 1490 401 C1498 413 1505 425 1511.400 432.300 C1522 447 1536 460 1541.200 476" />
      <path d="M1551.800 379 C1545 385 1547 392 1538 400 C1526 409 1516 419 1511.400 432.300 C1499 452 1470 467 1461.300 481.500" />
      <path stroke="#51ab64" d="M1446.400 1113 C1446 1134 1458 1148 1465 1165 C1470 1177 1475 1189 1481.800 1189.500 C1491 1188 1494 1174 1500 1166 C1518 1142 1540 1112 1557 1095 C1572 1079 1588 1072 1594.700 1058.500" />
    </g>
  </svg>
);

/* ---------- data ---------- */

const tabs: [string, number][] = [
  ["Standard", 107], ["CPlanes", 99], ["Set View", 104.3], ["Display", 92.5], ["Select", 84], ["Viewport Layout", 166],
  ["Visibility", 102], ["Transform", 115.5], ["Curve Tools", 129.3], ["Surface Tools", 145], ["Solid Tools", 121.5],
  ["SubD Tools", 125.5], ["Mesh Tools", 125.5], ["Render Tools", 140], ["Drafting", 100], ["New in V8", 115.5],
];

const snaps: [string, boolean][] = [
  ["End", true], ["Near", true], ["Point", true], ["Mid", true], ["Cen", false], ["Int", false], ["Perp", false],
  ["Tan", false], ["Quad", false], ["Knot", false], ["Vertex", false], ["Project", false], ["Disable", false],
];

const Gear = () => (
  <svg width="19" height="19" viewBox="-10 -10 20 20">
    {[0, 45, 90, 135].map((r) => <rect key={r} x="-2" y="-9.500" width="4" height="19" rx="1" fill="#b4b4b4" transform={`rotate(${r})`} />)}
    <circle r="7" fill="#b4b4b4" />
    <circle r="3.200" fill="#ececec" />
  </svg>
);

export default function App() {
  return (
    <Page>
      <Global />
      <Defs />
      <Window>
        <TopArea>
          <Grip>{[0, 1, 2].map((i) => <GripDot key={i} />)}</Grip>
          <TopColumn>
            <TabStrip>
              {tabs.map(([name, w]) => <Tab key={name} $w={w} $active={name === "Select"}>{name}</Tab>)}
            </TabStrip>
            <ToolBar>
              {toolIcons.map((t, i) => <ToolIcon key={i} {...t} />)}
              <ToolSeparator />
              {toolIcons2.map((t, i) => <ToolIcon key={i} {...t} />)}
            </ToolBar>
          </TopColumn>
        </TopArea>
        <Body>
          <Sidebar>
            <Panel $h={695}>
              <DotHeader>{[0, 1, 2, 3].map((i) => <HeaderDot key={i} />)}</DotHeader>
              <CommandInput>Command</CommandInput>
              <ToolGrid>
                {sideIcons.map((t, i) => (
                  <svg key={i} width="40" height="40" viewBox="0 0 40 40">
                    {t.art}
                    {t.more && <path d="M39 29.500V39H29Z" fill="#6b6b6b" />}
                  </svg>
                ))}
              </ToolGrid>
            </Panel>
            <Panel>
              <OsnapHeader>
                <OsnapTitle>OSnap</OsnapTitle>
                <Gear />
              </OsnapHeader>
              <OsnapTabs>
                <OsnapTab $active>
                  <svg width="45" height="33" viewBox="0 0 45 33">
                    <circle cx="15.500" cy="16.500" r="10.700" fill="none" stroke="#777" strokeWidth="1.300" />
                    <path d="M16 16.500H29" stroke="#000" strokeWidth="1.600" />
                    <Sq x={15.500} y={16.500} s={4.500} />
                  </svg>
                </OsnapTab>
                <OsnapTab>
                  <svg width="45" height="33" viewBox="0 0 45 33">
                    <g transform="translate(16 4.500) scale(.68)">{funnel}</g>
                    <path d="M36 6.500H39.500V9.500M18.500 24.500V27.500H22" fill="none" stroke="#222" strokeWidth="1.400" />
                  </svg>
                </OsnapTab>
              </OsnapTabs>
              <CheckList>
                {snaps.map(([n, on]) => (
                  <CheckRow key={n} $gap={n === "Disable"}>
                    <CheckBox $on={on}>
                      {on && (
                        <svg width="19.500" height="19.500" viewBox="0 0 20 20">
                          <path d="M5 10.500L8.500 14.500L15 5.500" fill="none" stroke="#fff" strokeWidth="2.300" strokeLinecap="round" strokeLinejoin="round" />
                        </svg>
                      )}
                    </CheckBox>
                    {n}
                  </CheckRow>
                ))}
              </CheckList>
            </Panel>
          </Sidebar>
          <Main>
            <Viewport>
              <Model />
              <ViewLabel>
                <ViewName>Top</ViewName>
                <ViewArrow>
                  <svg width="14" height="8" viewBox="0 0 14 8"><path d="M1 1H13L7 7.500Z" fill="#fff" /></svg>
                </ViewArrow>
              </ViewLabel>
            </Viewport>
            <Footer>
              <svg width="50" height="24" viewBox="0 0 50 24">
                <path d="M1 1.500H24V22.500H1ZM12.500 1.500V22.500M1 12H24M1 3H6M12.500 3H17M1 13.500H6M12.500 13.500H17" fill="none" stroke="#8f8f8f" strokeWidth="1.300" />
              </svg>
              <svg width="47" height="24" viewBox="0 0 47 24">
                <rect x="1.500" y="1.500" width="23" height="21" fill="none" stroke="#78a3f3" strokeWidth="1.400" />
                <path d="M1.500 3H7" stroke="#78a3f3" strokeWidth="1.500" />
              </svg>
              <FooterItem $w={176}>Perspective</FooterItem>
              <FooterItem $w={98} $active>Top</FooterItem>
              <FooterItem $w={113.800}>Front</FooterItem>
              <FooterItem $w={113.800}>Right</FooterItem>
              <FooterItem $w={150}>Layouts...</FooterItem>
            </Footer>
          </Main>
        </Body>
      </Window>
      <GreenFrame />
    </Page>
  );
}
